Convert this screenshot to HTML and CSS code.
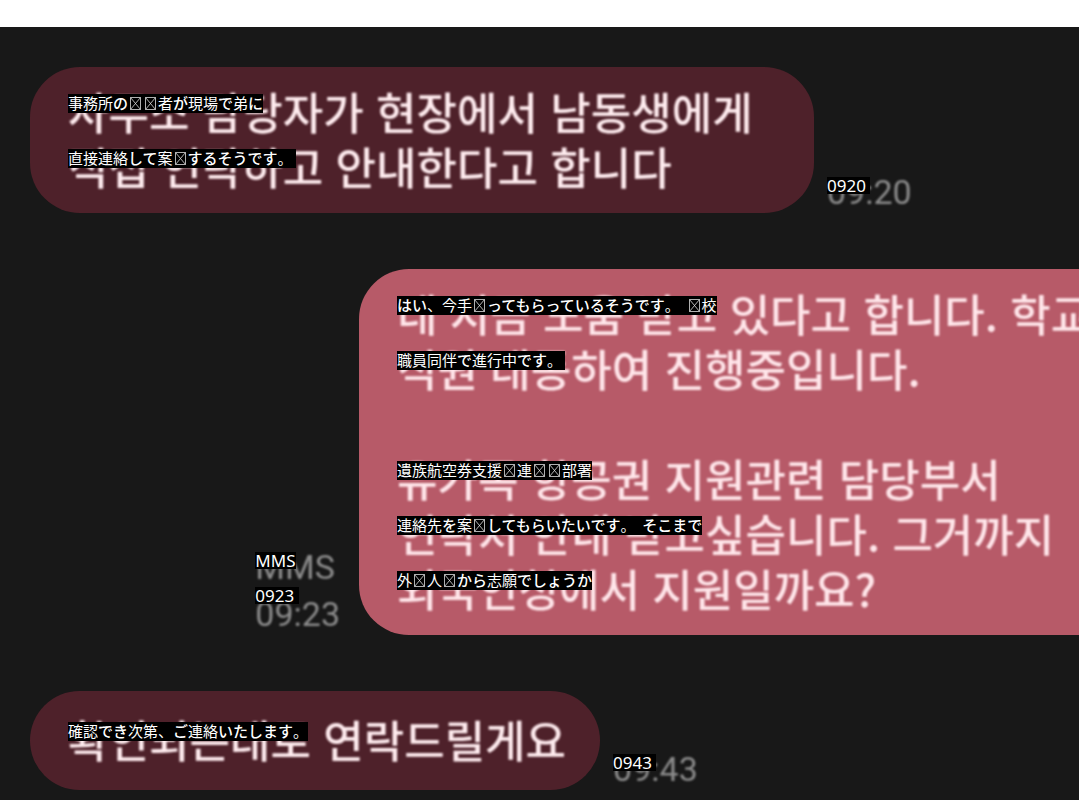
FILE: index.html
```html
<!DOCTYPE html>
<html lang="ko">
<head>
    <meta charset="UTF-8">
    <title>Messages</title>
    <link rel="stylesheet" href="styles.css">
</head>
<body>
<svg class="symbols" aria-hidden="true">
    <symbol id="missing" viewBox="0 0 15 15">
        <path d="M2.5 1.5h10v12h-10zM2.5 1.5l10 12M12.5 1.5l-10 12" fill="none" stroke="#ddd" stroke-width="0.8"/>
    </symbol>
</svg>

<main class="chat">
    <div class="message received">
        <div class="bubble wide">
            <p class="line"><span class="text">사무소 담당자가 현장에서 남동생에게</span><span class="label" lang="ja">事務所<b>の</b><svg class="tofu"><use href="#missing"/></svg><svg class="tofu"><use href="#missing"/></svg>者<b>が</b>現場<b>で</b>弟<b>に</b></span></p>
            <p class="line"><span class="text">직접 연락하고 안내한다고 합니다</span><span class="label" lang="ja">直接連絡<b>して</b>案<svg class="tofu"><use href="#missing"/></svg><b>するそうです</b>。&nbsp;</span></p>
        </div>
        <div class="meta">
            <p class="time"><span class="text">09:20</span><span class="label">0920&nbsp;</span></p>
        </div>
    </div>

    <div class="message sent">
        <div class="meta">
            <p class="time"><span class="text">MMS</span><span class="label">MMS</span></p>
            <p class="time raised"><span class="text">09:23</span><span class="label">0923&nbsp;</span></p>
        </div>
        <div class="bubble wide">
            <p class="line"><span class="text">네 지금 도움 받고 있다고 합니다. 학교</span><span class="label" lang="ja"><b>はい</b>、今手<svg class="tofu"><use href="#missing"/></svg><b>ってもらっているそうです</b>。&nbsp; <svg class="tofu"><use href="#missing"/></svg>校</span></p>
            <p class="line"><span class="text">직원 대동하여 진행중입니다.</span><span class="label" lang="ja">職員同伴<b>で</b>進行中<b>です</b>。&nbsp;</span></p>
            <p class="line"></p>
            <p class="line"><span class="text">유가족 항공권 지원관련 담당부서</span><span class="label" lang="ja">遺族航空券支援<svg class="tofu"><use href="#missing"/></svg>連<svg class="tofu"><use href="#missing"/></svg><svg class="tofu"><use href="#missing"/></svg>部署</span></p>
            <p class="line"><span class="text">연락처 안내 받고싶습니다. 그거까지</span><span class="label" lang="ja">連絡先<b>を</b>案<svg class="tofu"><use href="#missing"/></svg><b>してもらいたいです</b>。&nbsp; <b>そこまで</b></span></p>
            <p class="line"><span class="text">외국인청에서 지원일까요?</span><span class="label" lang="ja">外<svg class="tofu"><use href="#missing"/></svg>人<svg class="tofu"><use href="#missing"/></svg><b>から</b>志願<b>でしょうか</b></span></p>
        </div>
    </div>

    <div class="message received">
        <div class="bubble short">
            <p class="line"><span class="text">확인되는대로 연락드릴게요</span><span class="label" lang="ja">確認<b>でき</b>次第、<b>ご</b>連絡<b>いたします</b>。</span></p>
        </div>
        <div class="meta">
            <p class="time"><span class="text">09:43</span><span class="label">0943&nbsp;</span></p>
        </div>
    </div>
</main>
</body>
</html>
```

FILE: styles.css
```css
* {
    box-sizing: border-box;
}

body {
    margin: 0;
    padding-top: 27px;
    min-height: 100vh;
    display: flex;
    flex-direction: column;
    background-color: #fff;
    font-family: "Noto Sans CJK KR", sans-serif;
}

p {
    margin: 0;
}

.symbols {
    position: absolute;
    width: 0;
    height: 0;
}

.chat {
    flex: 1;
    display: flex;
    flex-direction: column;
    gap: 56px;
    padding: 40px 0 10px 30px;
    overflow: hidden;
    background-color: #181818;
}

.message {
    display: flex;
    align-items: flex-end;
    gap: 13px;
}

/* sent bubbles run past the right edge */
.sent {
    justify-content: flex-end;
    gap: 19px;
    margin-right: -64px;
}

.bubble {
    flex-shrink: 0;
    padding: 18px 34px 18px 38px;
    border-radius: 50px;
    background-color: #4e212a;
    color: #ffecef;
}

.wide {
    width: 784px;
}

.short {
    padding-top: 22px;
    padding-bottom: 22px;
}

.sent .bubble {
    background-color: #b75a68;
    color: #ffe6ea;
}

.line {
    position: relative;
    height: 55px;
    font-size: 44px;
    font-weight: 500;
    line-height: 52px;
    white-space: nowrap;
}

.text {
    display: inline-block;
    filter: blur(1px);
}

.meta {
    display: flex;
    flex-direction: column;
    gap: 7px;
    color: #8c8c8c;
}

.time {
    position: relative;
    height: 40px;
    font-family: Roboto, sans-serif;
    font-size: 34px;
    line-height: 38px;
    white-space: nowrap;
}

/* translated text laid over the original */
.label {
    position: absolute;
    top: 9px;
    left: 0;
    height: 19px;
    background-color: #000;
    color: #fff;
    font-family: "Noto Sans CJK JP", sans-serif;
    font-size: 15px;
    font-weight: 400;
    line-height: 18px;
}

.label b {
    font-weight: 500;
}

.time .label {
    top: 4px;
    height: 17px;
    font-family: "Noto Sans", sans-serif;
    font-size: 17px;
    line-height: 18px;
}

.raised .label {
    top: -8px;
}

.tofu {
    width: 15px;
    height: 15px;
    vertical-align: -2px;
}
```
